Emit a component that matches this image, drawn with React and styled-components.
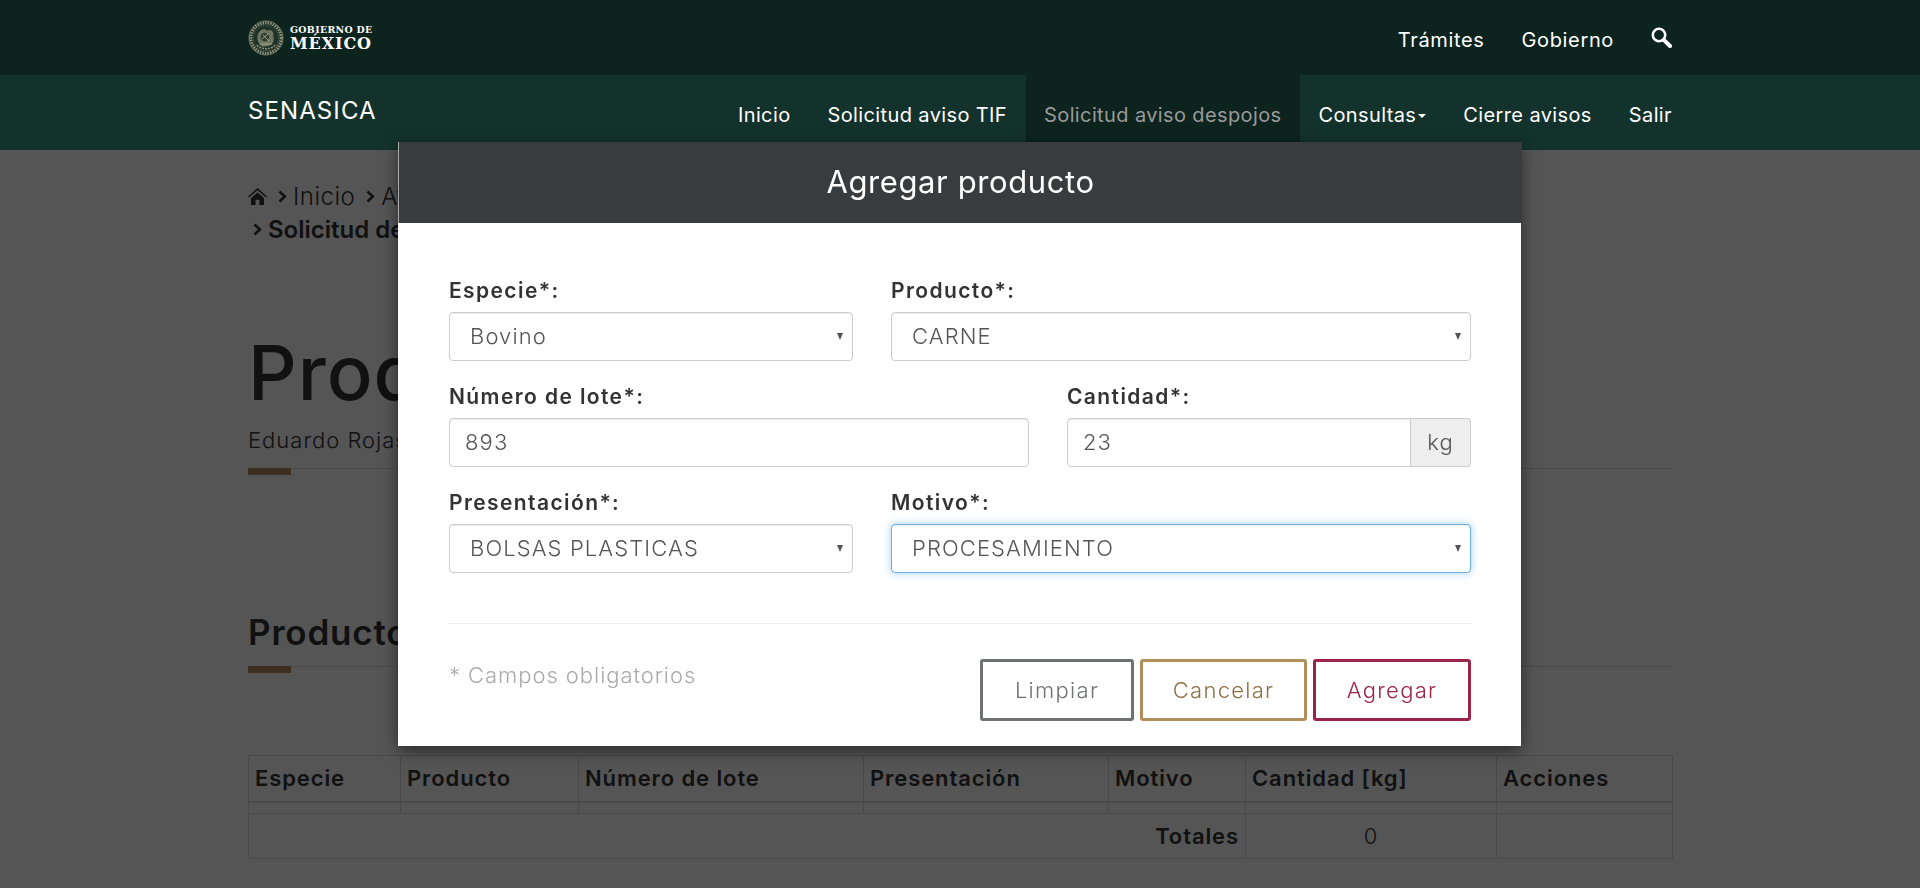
import React from "react";
import styled, { createGlobalStyle } from "styled-components";

const FONT = `Inter, "Noto Sans", "Liberation Sans", sans-serif`;

const Global = createGlobalStyle`
  html, body { margin: 0; padding: 0; height: 888px; overflow: hidden; background: #fff; }
  body { font-family: ${FONT}; color: #333; }
  * { box-sizing: border-box; }
`;

const Header = styled.header`
  position: relative;
  z-index: 20;
`;
const Bar = styled.div`
  height: ${(p) => p.$h}px;
  background: ${(p) => p.$bg};
`;
const Inner = styled.div`
  width: 1424px;
  height: 100%;
  margin: 0 auto;
  display: flex;
  justify-content: space-between;
  align-items: stretch;
`;
const LogoLink = styled.a`
  display: flex;
  align-items: center;
  gap: 6px;
  height: 75px;
`;
const LogoText = styled.div`
  font-family: "DejaVu Serif", "Liberation Serif", serif;
  font-weight: 700;
  color: #fff;
  display: flex;
  flex-direction: column;
  line-height: 1;
`;
const LogoSmall = styled.span`
  font-size: 9.4px;
  letter-spacing: 0.35px;
  line-height: 11px;
`;
const LogoBig = styled.span`
  font-size: 16px;
  letter-spacing: 0.9px;
  line-height: 16px;
  margin-top: 1px;
`;
const TopLinks = styled.nav`
  display: flex;
  align-items: center;
  gap: 37px;
  height: 75px;
`;
const TopLink = styled.a`
  color: #fff;
  font-size: 20px;
  letter-spacing: 0.65px;
  line-height: 24px;
  margin-top: 5px;
`;
const SearchBtn = styled.span`
  display: flex;
  margin-top: 0;
  color: #fff;
`;
const Brand = styled.div`
  color: #fff;
  font-size: 24px;
  letter-spacing: 1.1px;
  line-height: 30px;
  padding-top: 21px;
`;
const MainNav = styled.nav`
  display: flex;
  align-items: stretch;
  margin-right: -18.5px;
`;
const NavItem = styled.a`
  display: flex;
  align-items: center;
  padding: 4px 18.5px 0;
  font-size: 20px;
  letter-spacing: 0.38px;
  color: ${(p) => (p.$active ? "#9a9a9a" : "#fff")};
  background: ${(p) => (p.$active ? "#0c231e" : "transparent")};
  white-space: nowrap;
`;
const Caret = styled.i`
  width: 0;
  height: 0;
  margin: 2px 0 0 2px;
  border-left: 4.5px solid transparent;
  border-right: 4.5px solid transparent;
  border-top: 4.5px solid #fff;
`;

const Main = styled.main`
  width: 1424px;
  margin: 0 auto;
  padding-top: 30px;
`;
const Crumbs = styled.div`
  font-size: 24px;
  font-weight: 300;
  letter-spacing: 0.5px;
  line-height: 33px;
  color: #333;
`;
const CrumbRow = styled.div`
  display: flex;
  align-items: center;
  gap: 6px;
`;
const Strong = styled.b`
  font-weight: 600;
  letter-spacing: 0;
`;
const Title = styled.h1`
  font-size: 76px;
  font-weight: 500;
  line-height: 80px;
  margin: 86px 0 0;
  letter-spacing: 1px;
`;
const Author = styled.p`
  font-size: 22px;
  font-weight: 300;
  letter-spacing: 1px;
  line-height: 26px;
  margin: 15px 0 0;
`;
const Rule = styled.div`
  height: 1px;
  margin-top: ${(p) => p.$mt}px;
  background: #ddd;
  position: relative;
  &::after {
    content: "";
    position: absolute;
    left: 0;
    top: 0;
    width: 43px;
    height: 7px;
    background: #b38e5d;
  }
`;
const Subtitle = styled.h2`
  font-size: 35px;
  font-weight: 600;
  line-height: 40px;
  margin: 143px 0 0;
  letter-spacing: 0.8px;
`;
const Table = styled.table`
  width: 100%;
  table-layout: fixed;
  border-collapse: collapse;
  margin-top: 88px;
`;
const Th = styled.th`
  height: 46px;
  border: 1px solid #ddd;
  border-bottom-width: 2px;
  padding: 0 6px;
  font-size: 22px;
  font-weight: 600;
  letter-spacing: 0.9px;
  text-align: left;
  width: ${(p) => p.$w}px;
`;
const Td = styled.td`
  height: ${(p) => p.$h}px;
  border: 1px solid #ddd;
  padding: 0 6px;
  font-size: 22px;
  font-weight: ${(p) => (p.$bold ? 600 : 300)};
  letter-spacing: 0.9px;
  text-align: ${(p) => p.$align || "left"};
`;

const Backdrop = styled.div`
  position: fixed;
  inset: 0;
  z-index: 10;
  background: rgba(0, 0, 0, 0.667);
`;
const ModalLayer = styled.div`
  position: fixed;
  inset: 0;
  z-index: 30;
  display: flex;
  justify-content: center;
  align-items: flex-start;
`;
const Modal = styled.div`
  width: 1123px;
  margin-top: 142px;
  margin-right: 1px;
  background: #fff;
  box-shadow: 0 5px 15px rgba(0, 0, 0, 0.5);
`;
const ModalHead = styled.div`
  height: 81px;
  padding-bottom: 2px;
  margin-right: -1px;
  border-left: 1px solid #a9a9a9;
  background: #393c3e;
  color: #fff;
  display: flex;
  align-items: center;
  justify-content: center;
  font-size: 31px;
  font-weight: 400;
  letter-spacing: 0.6px;
`;
const ModalBody = styled.div`
  padding: 56px 50px 25px 51px;
`;
const Row = styled.div`
  display: grid;
  grid-template-columns: ${(p) => p.$cols};
  column-gap: 38px;
  margin-bottom: 24px;
`;
const Field = styled.div`
  display: flex;
  flex-direction: column;
  min-width: 0;
`;
const Label = styled.label`
  font-size: 21px;
  font-weight: 600;
  line-height: 24px;
  letter-spacing: 1.4px;
  color: #333;
  margin-bottom: 9px;
`;
const SelectWrap = styled.div`
  position: relative;
  &::after {
    content: "";
    position: absolute;
    right: 10px;
    top: 21px;
    border-left: 3.5px solid transparent;
    border-right: 3.5px solid transparent;
    border-top: 7px solid #555;
    pointer-events: none;
  }
`;
const Select = styled.select`
  display: block;
  width: 100%;
  height: 49px;
  appearance: none;
  background: #fff;
  border: 1px solid ${(p) => (p.$focused ? "#66afe9" : "#ccc")};
  border-radius: 4px;
  padding: 0 24px 2px 20px;
  font-family: ${FONT};
  font-size: 22px;
  font-weight: 300;
  letter-spacing: 1.1px;
  color: #555;
  outline: none;
  box-shadow: ${(p) =>
    p.$focused
      ? "inset 0 1px 1px rgba(0,0,0,.075), 0 0 8px rgba(102,175,233,.6)"
      : "inset 0 1px 1px rgba(0,0,0,.075)"};
`;
const Input = styled.input`
  display: block;
  flex: 1;
  width: 100%;
  min-width: 0;
  height: 49px;
  border: 1px solid #ccc;
  border-radius: ${(p) => (p.$joined ? "4px 0 0 4px" : "4px")};
  padding: 0 15px 2px;
  font-family: ${FONT};
  font-size: 22px;
  font-weight: 300;
  letter-spacing: 1.1px;
  color: #555;
  outline: none;
  box-shadow: inset 0 1px 1px rgba(0, 0, 0, 0.075);
`;
const InputGroup = styled.div`
  display: flex;
`;
const Addon = styled.span`
  width: 60px;
  height: 49px;
  padding-bottom: 2px;
  display: flex;
  align-items: center;
  justify-content: center;
  background: #eee;
  border: 1px solid #ccc;
  border-left: 0;
  border-radius: 0 4px 4px 0;
  font-size: 22px;
  font-weight: 300;
  letter-spacing: 1px;
  color: #555;
`;
const Divider = styled.hr`
  border: 0;
  border-top: 1px solid #eee;
  margin: 50px 0 0;
`;
const Footer = styled.div`
  display: flex;
  justify-content: space-between;
  align-items: flex-start;
  margin-top: 35px;
`;
const Note = styled.span`
  font-size: 22px;
  font-weight: 300;
  letter-spacing: 0.95px;
  line-height: 26px;
  color: #aaa;
  margin-top: 3px;
`;
const Buttons = styled.div`
  display: flex;
  gap: 6px;
`;
const Button = styled.button`
  width: ${(p) => p.$w}px;
  height: 62px;
  background: #fff;
  border: 3px solid ${(p) => p.$color};
  border-radius: 3px;
  color: ${(p) => p.$textColor || p.$color};
  font-family: ${FONT};
  font-size: 22px;
  font-weight: 300;
  letter-spacing: 1.3px;
`;

const HomeIcon = () => (
  <svg width="19" height="17" viewBox="0 0 19 17" fill="currentColor">
    <path d="M9.5 0 L0 8.4 L1 9.6 L9.5 2.2 L18 9.6 L19 8.4 Z" />
    <path d="M9.5 4.4 L3 10 V17 H7.6 V11.8 H11.4 V17 H16 V10 Z" />
  </svg>
);
const Chevron = styled(({ className }) => (
  <svg className={className} width="9" height="13" viewBox="0 0 9 13" fill="none" stroke="currentColor" strokeWidth="2.6">
    <path d="M1.5 1.5 L6.8 6.5 L1.5 11.5" />
  </svg>
))`
  margin-left: 5px;
`;
const SearchIcon = () => (
  <svg width="21" height="21" viewBox="0 0 21 21" fill="none" stroke="currentColor">
    <circle cx="8" cy="8" r="6.2" strokeWidth="2.6" />
    <path d="M12.8 12.8 L19 19" strokeWidth="4" strokeLinecap="round" />
  </svg>
);
const Seal = () => (
  <svg width="36" height="36" viewBox="0 0 36 36" fill="none">
    <circle cx="18" cy="18" r="17.6" fill="#1f3229" />
    <circle cx="18" cy="18" r="17" stroke="#6e7460" strokeWidth="1" />
    <circle cx="18" cy="18" r="15.2" stroke="#8e917b" strokeWidth="3" strokeDasharray="1.5 1.1" />
    <circle cx="18" cy="18" r="12.6" stroke="#5d6452" strokeWidth="1" strokeDasharray="1 1" />
    <path d="M10 14 C12 9 17 8 19 11 C22 8 27 12 25 16 C27 20 25 25 20 26 L15 27 C11 25 8 20 10 14 Z" fill="#6f755f" />
    <path d="M13 15 C16 11 20 13 21 16 C22 20 18 22 15 21 C13 20 12 18 13 15 Z" fill="#2c3d32" />
    <path d="M15 15 L21 21 M14 19 L20 14 M12 24 L24 24" stroke="#a9aa90" strokeWidth="0.9" />
    <path d="M9 25 C13 30 23 30 27 25" stroke="#8e917b" strokeWidth="1.4" strokeDasharray="2 1" />
  </svg>
);

const columns = [
  { label: "Especie", w: 152 },
  { label: "Producto", w: 178 },
  { label: "Número de lote", w: 285 },
  { label: "Presentación", w: 245 },
  { label: "Motivo", w: 137 },
  { label: "Cantidad [kg]", w: 251 },
  { label: "Acciones", w: 176 },
];

const Choice = ({ value, focused }) => (
  <SelectWrap>
    <Select $focused={focused} defaultValue={value}>
      <option>{value}</option>
    </Select>
  </SelectWrap>
);

export default function App() {
  return (
    <>
      <Global />
      <Header>
        <Bar $h={75} $bg="#0c231e">
          <Inner>
            <LogoLink>
              <Seal />
              <LogoText>
                <LogoSmall>GOBIERNO DE</LogoSmall>
                <LogoBig>MÉXICO</LogoBig>
              </LogoText>
            </LogoLink>
            <TopLinks>
              <TopLink>Trámites</TopLink>
              <TopLink>Gobierno</TopLink>
              <SearchBtn>
                <SearchIcon />
              </SearchBtn>
            </TopLinks>
          </Inner>
        </Bar>
        <Bar $h={75} $bg="#13322b">
          <Inner>
            <Brand>SENASICA</Brand>
            <MainNav>
              <NavItem>Inicio</NavItem>
              <NavItem>Solicitud aviso TIF</NavItem>
              <NavItem $active>Solicitud aviso despojos</NavItem>
              <NavItem>
                Consultas
                <Caret />
              </NavItem>
              <NavItem>Cierre avisos</NavItem>
              <NavItem>Salir</NavItem>
            </MainNav>
          </Inner>
        </Bar>
      </Header>

      <Main>
        <Crumbs>
          <CrumbRow>
            <HomeIcon />
            <Chevron />
            Inicio
            <Chevron />
            Avisos
          </CrumbRow>
          <CrumbRow>
            <Chevron />
            <Strong>Solicitud de</Strong>
          </CrumbRow>
        </Crumbs>
        <Title>Productos</Title>
        <Author>Eduardo Rojas</Author>
        <Rule $mt={15} />
        <Subtitle>Productos</Subtitle>
        <Rule $mt={14} />
        <Table>
          <thead>
            <tr>
              {columns.map((c) => (
                <Th key={c.label} $w={c.w}>
                  {c.label}
                </Th>
              ))}
            </tr>
          </thead>
          <tbody>
            <tr>
              {columns.map((c) => (
                <Td key={c.label} $h={12} />
              ))}
            </tr>
            <tr>
              <Td $h={45} colSpan={5} $align="right" $bold>
                Totales
              </Td>
              <Td $h={45} $align="center">
                0
              </Td>
              <Td $h={45} />
            </tr>
          </tbody>
        </Table>
      </Main>

      <Backdrop />
      <ModalLayer>
        <Modal>
          <ModalHead>Agregar producto</ModalHead>
          <ModalBody>
            <Row $cols="404px 1fr">
              <Field>
                <Label>Especie*:</Label>
                <Choice value="Bovino" />
              </Field>
              <Field>
                <Label>Producto*:</Label>
                <Choice value="CARNE" />
              </Field>
            </Row>
            <Row $cols="1fr 404px">
              <Field>
                <Label>Número de lote*:</Label>
                <Input defaultValue="893" />
              </Field>
              <Field>
                <Label>Cantidad*:</Label>
                <InputGroup>
                  <Input $joined defaultValue="23" />
                  <Addon>kg</Addon>
                </InputGroup>
              </Field>
            </Row>
            <Row $cols="404px 1fr">
              <Field>
                <Label>Presentación*:</Label>
                <Choice value="BOLSAS PLASTICAS" />
              </Field>
              <Field>
                <Label>Motivo*:</Label>
                <Choice value="PROCESAMIENTO" focused />
              </Field>
            </Row>
            <Divider />
            <Footer>
              <Note>* Campos obligatorios</Note>
              <Buttons>
                <Button $w={154} $color="#6f7271">
                  Limpiar
                </Button>
                <Button $w={167} $color="#b38e5d" $textColor="#8f6f45">
                  Cancelar
                </Button>
                <Button $w={158} $color="#9d2449">
                  Agregar
                </Button>
              </Buttons>
            </Footer>
          </ModalBody>
        </Modal>
      </ModalLayer>
    </>
  );
}
